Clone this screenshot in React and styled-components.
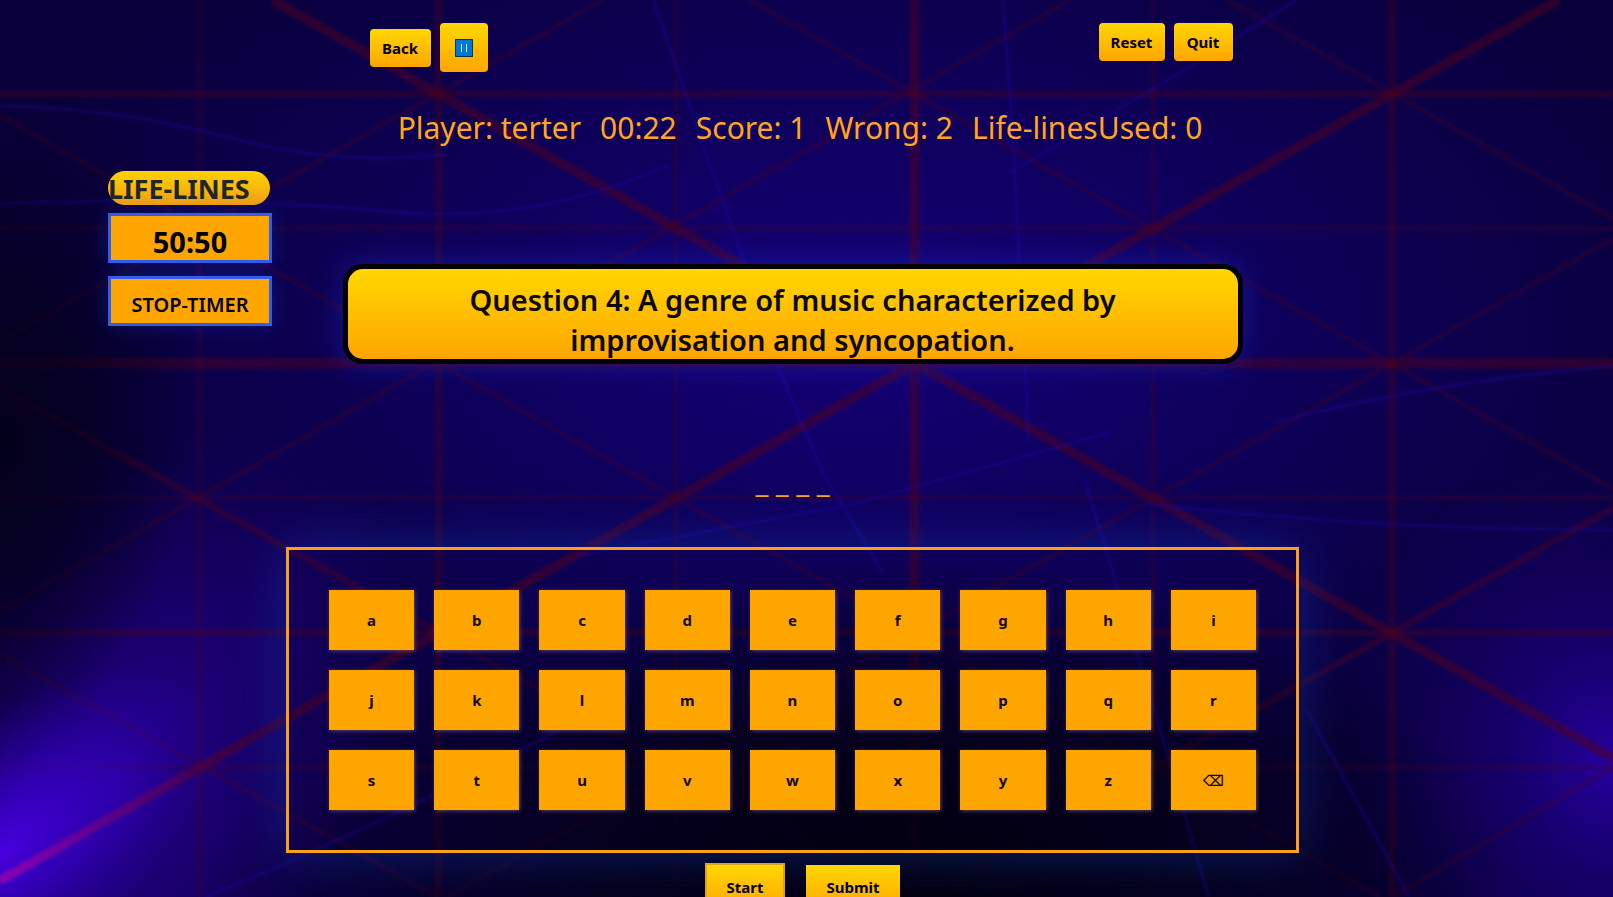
import React from "react";
import styled, { createGlobalStyle } from "styled-components";

const GlobalStyle = createGlobalStyle`
  * { box-sizing: border-box; }
  body {
    margin: 0;
    background: #07002f;
    font-family: "Noto Sans", "Open Sans", sans-serif;
    overflow: hidden;
  }
  button { font-family: inherit; cursor: pointer; }
`;

const Page = styled.div`
  position: relative;
  height: 100vh;
  overflow: hidden;
  padding-right: 28px;
`;

const Backdrop = styled.svg`
  position: absolute;
  inset: 0;
  width: 100%;
  height: 100%;
`;

const Content = styled.main`
  position: relative;
  display: flex;
  flex-direction: column;
  align-items: center;
`;

const TopBar = styled.header`
  display: flex;
  justify-content: space-between;
  align-items: flex-start;
  width: 863px;
  max-width: 100%;
  margin: 23px 0 0 17px;
`;

const ButtonPair = styled.div`
  display: flex;
  align-items: center;
  gap: 9px;
`;

const GoldButton = styled.button`
  display: flex;
  align-items: center;
  justify-content: center;
  width: ${(p) => p.$width}px;
  height: ${(p) => p.$height || 38}px;
  padding: 0;
  border: 0;
  border-radius: 4px;
  background: linear-gradient(#ffd700, #ffa500);
  color: #000;
  font-size: 15px;
  font-weight: 700;
`;

const Status = styled.div`
  display: flex;
  justify-content: center;
  gap: 19px;
  margin: 32px 0 0 15px;
  color: #ffa620;
  font-size: 30px;
  line-height: 48px;
  white-space: nowrap;
`;

const Board = styled.section`
  display: grid;
  grid-template-columns: 1fr minmax(0, 900px) 1fr;
  width: 100%;
  margin-top: 19px;
`;

const LifeLines = styled.aside`
  display: flex;
  flex-direction: column;
  padding-left: 108px;
`;

const LifeTitle = styled.h2`
  width: 162px;
  height: 34px;
  margin: 0 0 8px;
  border-radius: 17px;
  background: linear-gradient(#fbd304, #f3a012);
  color: #212529;
  font-size: 27px;
  font-weight: 700;
  line-height: 36px;
`;

const LifeButton = styled.button`
  width: 164px;
  height: 50px;
  margin-bottom: 13px;
  padding: 8px 0 0;
  border: 3px solid #305eea;
  background: #ffa500;
  box-shadow: 0 0 20px rgba(30, 70, 220, 0.3);
  color: #000;
  font-size: ${(p) => p.$size}px;
  font-weight: ${(p) => p.$weight};
  line-height: 36px;
`;

const Question = styled.h1`
  height: 100px;
  margin: 93px 0 0;
  padding: 11px 100px 0;
  border: 5px solid #000;
  border-radius: 20px;
  background: linear-gradient(#ffd700, #ffa500);
  box-shadow: 0 0 30px rgba(30, 60, 230, 0.4);
  color: #0b0800;
  font-size: 29px;
  font-weight: 600;
  line-height: 40px;
  text-align: center;
`;

const Answer = styled.p`
  margin: 97px 0 0;
  color: #ffa620;
  font-size: 29px;
  line-height: 40px;
`;

const Keyboard = styled.section`
  display: grid;
  grid-template-columns: repeat(9, 1fr);
  gap: 20px;
  width: 1013px;
  max-width: 100%;
  margin-top: 46px;
  padding: 40px;
  border: 3px solid #f9a01b;
  box-shadow: 0 0 50px rgba(25, 75, 210, 0.4);
`;

const Key = styled.button`
  height: 60px;
  padding: 0;
  border: 0;
  background: #ffa500;
  box-shadow: 1px 1px 4px rgba(150, 110, 130, 0.6);
  color: #120800;
  font-family: "Noto Sans", "DejaVu Sans", sans-serif;
  font-size: 15px;
  font-weight: 700;
`;

const Actions = styled.div`
  display: flex;
  align-items: center;
  gap: 21px;
  margin: 10px 0 0 20px;
`;

const ActionButton = styled.button`
  width: ${(p) => p.$width}px;
  height: ${(p) => (p.$framed ? 50 : 46)}px;
  padding: 0 0 2px;
  border: ${(p) => (p.$framed ? "2px solid #dfa01c" : "0")};
  background: linear-gradient(#ffd700, #ffa500);
  color: #000;
  font-size: 15px;
  font-weight: 700;
`;

const letters = "abcdefghijklmnopqrstuvwxyz".split("");

function Night() {
  return (
    <Backdrop viewBox="0 0 1568 872" preserveAspectRatio="none" aria-hidden="true">
      <defs>
        <radialGradient id="center" cx="0.53" cy="0.36" r="0.55">
          <stop offset="0" stopColor="#150078" />
          <stop offset="0.5" stopColor="#0e0058" />
          <stop offset="1" stopColor="#0e0058" stopOpacity="0" />
        </radialGradient>
        <radialGradient id="haze" gradientUnits="userSpaceOnUse" cx="0" cy="0" r="1" gradientTransform="translate(110 770) rotate(-58) scale(400 230)">
          <stop offset="0" stopColor="#2a00a0" stopOpacity="0.9" />
          <stop offset="0.5" stopColor="#1e007c" stopOpacity="0.7" />
          <stop offset="1" stopColor="#180068" stopOpacity="0" />
        </radialGradient>
        <radialGradient id="corner" gradientUnits="userSpaceOnUse" cx="0" cy="0" r="1" gradientTransform="translate(0 830) rotate(-40) scale(250 120)">
          <stop offset="0" stopColor="#4800e0" />
          <stop offset="0.4" stopColor="#3800c8" stopOpacity="0.7" />
          <stop offset="1" stopColor="#2800a0" stopOpacity="0" />
        </radialGradient>
        <radialGradient id="right" gradientUnits="userSpaceOnUse" cx="0" cy="0" r="1" gradientTransform="translate(1568 740) rotate(70) scale(300 260)">
          <stop offset="0" stopColor="#2600a0" />
          <stop offset="0.4" stopColor="#1a007c" stopOpacity="0.7" />
          <stop offset="1" stopColor="#160070" stopOpacity="0" />
        </radialGradient>
        <radialGradient id="floor" cx="0.56" cy="1" r="0.38">
          <stop offset="0" stopColor="#02000f" />
          <stop offset="0.5" stopColor="#02000f" stopOpacity="0.7" />
          <stop offset="1" stopColor="#02000f" stopOpacity="0" />
        </radialGradient>
        <radialGradient id="edge" gradientUnits="userSpaceOnUse" cx="0" cy="0" r="1" gradientTransform="translate(0 430) rotate(10) scale(190 340)">
          <stop offset="0" stopColor="#020014" stopOpacity="0.85" />
          <stop offset="0.4" stopColor="#020014" stopOpacity="0.6" />
          <stop offset="1" stopColor="#020014" stopOpacity="0" />
        </radialGradient>
        <linearGradient id="streak" gradientUnits="userSpaceOnUse" x1="0" y1="856" x2="250" y2="714">
          <stop offset="0" stopColor="#a800b0" stopOpacity="0.7" />
          <stop offset="0.5" stopColor="#800080" stopOpacity="0.4" />
          <stop offset="1" stopColor="#600050" stopOpacity="0" />
        </linearGradient>
        <filter id="soft" x="-5%" y="-5%" width="110%" height="110%">
          <feGaussianBlur stdDeviation="1.6" />
        </filter>
      </defs>
      <rect width="1568" height="872" fill="#09003a" />
      <rect width="1568" height="872" fill="url(#center)" />
      <rect width="1568" height="872" fill="url(#haze)" />
      <rect width="1568" height="872" fill="url(#right)" />
      <g fill="none" stroke="#4a001e" filter="url(#soft)">
        <path strokeWidth="10" opacity="0.5" d="M889 0V872M0 353H1568" />
        <path strokeWidth="6" opacity="0.42" d="M426 0V872M1353 0V872M0 91H1568M0 615H1568" />
        <path strokeWidth="5" opacity="0.26" d="M194 0V872M657 0V872M1121 0V872M0 222H1568M0 484H1568M0 746H1568" />
        <path strokeWidth="9" opacity="0.55" d="M265 0L889 353L1568 737M1515 0L889 353L0 856" />
        <path strokeWidth="6" opacity="0.48" d="M0 377L426 615M1568 494L1121 746" />
        <path strokeWidth="5" opacity="0.28" d="M426 615L880 872M1121 746L899 872M586 0L0 332M1193 0L1568 212M1040 0L0 594M728 0L1568 475M0 112L1343 872M1568 232L435 872M0 636L426 872M1353 872L1568 746" />
      </g>
      <rect width="1568" height="872" fill="url(#floor)" />
      <rect width="1568" height="872" fill="url(#edge)" />
      <g fill="none" stroke="#2408c8" strokeWidth="3" opacity="0.26" filter="url(#soft)">
        <path d="M0 103Q110 104 220 133T430 150" />
        <path d="M0 198Q220 190 370 205T650 160" />
        <path d="M745 330L800 460L858 556" />
        <path d="M635 0L690 160L725 258" />
        <path d="M975 0L985 140L1000 430" />
        <path d="M1260 0Q1120 90 980 168" />
        <path d="M1055 468L1125 700L1175 872" />
        <path d="M1080 420L830 490L560 540" />
        <path d="M1115 490Q1340 515 1568 515" />
        <path d="M1270 690L1370 872" />
        <path d="M200 872Q400 790 560 700" />
        <path d="M1568 356Q1400 370 1240 410" />
      </g>
      <rect width="1568" height="872" fill="url(#corner)" />
      <path d="M0 856L250 714" stroke="url(#streak)" strokeWidth="9" filter="url(#soft)" />
    </Backdrop>
  );
}

function PauseIcon() {
  return (
    <svg width="18" height="18" viewBox="0 0 18 18" aria-hidden="true">
      <rect x="0.5" y="0.5" width="17" height="17" fill="#0078d7" stroke="#10354a" />
      <path d="M6.5 5V13M11.5 5V13" stroke="#e8f4ff" strokeWidth="1" />
    </svg>
  );
}

export default function App() {
  return (
    <Page>
      <GlobalStyle />
      <Night />
      <Content>
        <TopBar>
          <ButtonPair>
            <GoldButton $width={61}>Back</GoldButton>
            <GoldButton $width={48} $height={49} aria-label="Pause"><PauseIcon /></GoldButton>
          </ButtonPair>
          <ButtonPair>
            <GoldButton $width={66}>Reset</GoldButton>
            <GoldButton $width={59}>Quit</GoldButton>
          </ButtonPair>
        </TopBar>
        <Status>
          <span>Player: terter</span>
          <span>00:22</span>
          <span>Score: 1</span>
          <span>Wrong: 2</span>
          <span>Life-linesUsed: 0</span>
        </Status>
        <Board>
          <LifeLines>
            <LifeTitle>LIFE-LINES</LifeTitle>
            <LifeButton $size={29} $weight={700}>50:50</LifeButton>
            <LifeButton $size={20} $weight={600}>STOP-TIMER</LifeButton>
          </LifeLines>
          <Question>Question 4: A genre of music characterized by improvisation and syncopation.</Question>
        </Board>
        <Answer>_ _ _ _</Answer>
        <Keyboard aria-label="Letters">
          {letters.map((l) => <Key key={l}>{l}</Key>)}
          <Key aria-label="Delete">⌫</Key>
        </Keyboard>
        <Actions>
          <ActionButton $width={80} $framed>Start</ActionButton>
          <ActionButton $width={94}>Submit</ActionButton>
        </Actions>
      </Content>
    </Page>
  );
}
